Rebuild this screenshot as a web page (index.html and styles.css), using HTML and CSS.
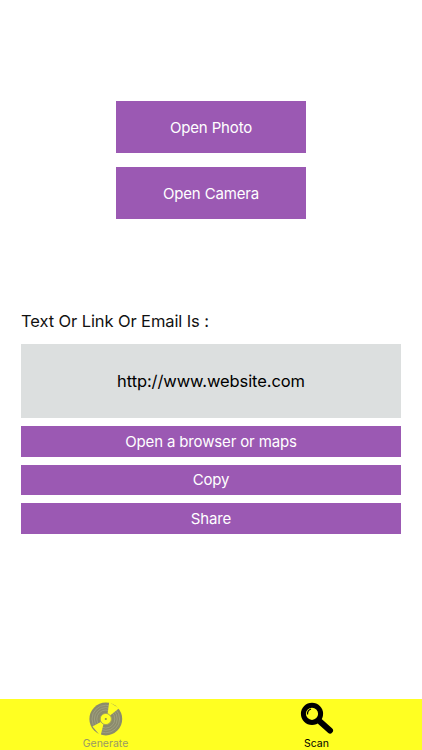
FILE: index.html
```html
<!DOCTYPE html>
<html lang="en">
<head>
<meta charset="utf-8">
<title>Scan</title>
<link rel="stylesheet" href="styles.css">
</head>
<body>
<main class="content">
  <div class="open-actions">
    <button class="btn btn-large">Open Photo</button>
    <button class="btn btn-large">Open Camera</button>
  </div>
  <section class="result">
    <p class="result-label">Text Or Link Or Email Is :</p>
    <div class="result-box">http://www.website.com</div>
    <div class="result-actions">
      <button class="btn btn-wide">Open a browser or maps</button>
      <button class="btn btn-wide">Copy</button>
      <button class="btn btn-wide">Share</button>
    </div>
  </section>
</main>
<nav class="tabbar">
  <div class="tab tab-muted">
    <svg class="tab-icon" viewBox="0 0 36 36" aria-hidden="true">
      <circle cx="17.8" cy="18" r="16.4" fill="#8b8b6c"/>
      <circle cx="17.8" cy="18" r="13.8" fill="none" stroke="#a3a385" stroke-width="0.8"/>
      <circle cx="17.8" cy="18" r="11.4" fill="none" stroke="#a3a385" stroke-width="0.8"/>
      <circle cx="17.8" cy="18" r="9" fill="none" stroke="#a3a385" stroke-width="0.8"/>
      <path d="M21.2 1 L31 7.2 L19 17 Z" fill="#ffff22"/>
      <path d="M16.5 19 L4.5 25.5 L12.5 35 Z" fill="#ffff22"/>
      <circle cx="17.8" cy="18" r="5.6" fill="#ffff22" stroke="#a8a858" stroke-width="1"/>
      <circle cx="17.8" cy="18" r="1.1" fill="#8f8f4a"/>
    </svg>
    <span class="tab-label">Generate</span>
  </div>
  <div class="tab">
    <svg class="tab-icon" viewBox="0 0 36 36" aria-hidden="true">
      <circle cx="13" cy="12.8" r="8.6" fill="none" stroke="#000" stroke-width="5"/>
      <path d="M21.5 21 L31 29.5" stroke="#000" stroke-width="6" stroke-linecap="round"/>
      <path d="M8.5 13.5 A5.5 5.5 0 0 1 12 8" fill="none" stroke="#000" stroke-width="1.3"/>
    </svg>
    <span class="tab-label">Scan</span>
  </div>
</nav>
</body>
</html>
```
FILE: styles.css
```css
html, body {
  margin: 0;
  height: 750px;
  background: #fff;
  font-family: Inter, "Liberation Sans", sans-serif;
  overflow: hidden;
}
body {
  display: flex;
  flex-direction: column;
}
.content {
  flex: 1;
  display: flex;
  flex-direction: column;
  padding: 101px 21px 0;
}
.open-actions {
  display: flex;
  flex-direction: column;
  align-items: center;
  gap: 14px;
}
.btn {
  display: block;
  border: 0;
  padding: 0;
  background: #9b59b3;
  color: #fff;
  font: 400 15px Inter, "Liberation Sans", sans-serif;
  letter-spacing: -0.15px;
  text-align: center;
}
.btn-large {
  width: 190px;
  height: 52px;
}
.btn-wide {
  width: 100%;
  height: 30.5px;
}
.result {
  margin-top: 90px;
}
.result-label {
  margin: 0;
  height: 24px;
  line-height: 24px;
  font-size: 16.5px;
  letter-spacing: -0.1px;
  color: #111;
}
.result-box {
  margin-top: 11px;
  height: 74px;
  display: flex;
  align-items: center;
  justify-content: center;
  background: #dcdfdf;
  color: #000;
  font-size: 16.5px;
  letter-spacing: -0.1px;
}
.result-actions {
  margin-top: 8px;
  display: flex;
  flex-direction: column;
  gap: 8px;
}
.tabbar {
  height: 51px;
  display: flex;
  background: #ffff22;
}
.tab {
  flex: 1;
  display: flex;
  flex-direction: column;
  align-items: center;
  color: #000;
  font-size: 10.5px;
  line-height: 12px;
}
.tab-muted {
  color: #999966;
}
.tab-icon {
  width: 36px;
  height: 36px;
  margin-top: 2px;
}
.tab-label {
  margin-top: 1px;
}
```
